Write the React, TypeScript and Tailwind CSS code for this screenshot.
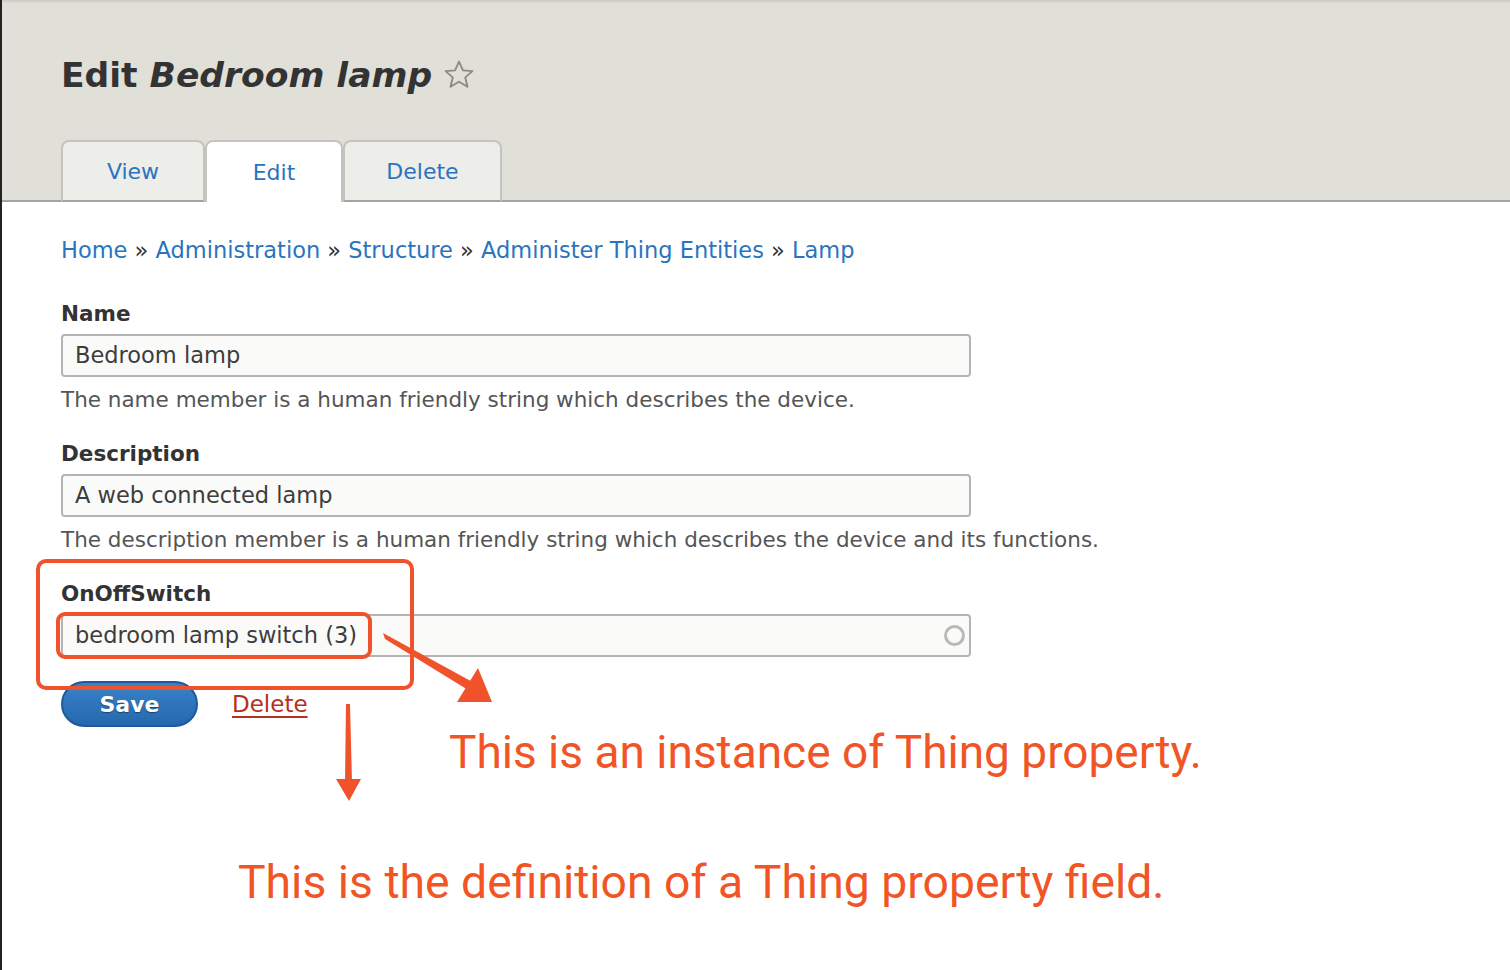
import React from 'react';

const tabs = [
	{ label: 'View', width: 'w-[144px]', active: false },
	{ label: 'Edit', width: 'w-[138px]', active: true },
	{ label: 'Delete', width: 'w-[159px]', active: false },
];

const crumbs = ['Home', 'Administration', 'Structure', 'Administer Thing Entities', 'Lamp'];

function Field({
	label,
	value,
	help,
	busy,
}: {
	label: string;
	value: string;
	help?: string;
	busy?: boolean;
}) {
	return (
		<div className="mb-[24px]">
			<label className="block text-[21.5px] font-bold text-[#333] leading-[30px] mb-[5px]">{label}</label>
			<div className="flex items-center w-[910px] h-[43px] border-2 border-[#b4b4b4] rounded-[4px] bg-[#fafaf8] pl-[12px] pr-[4px] text-[22.5px] text-[#3d3d3d]">
				<span className="flex-1">{value}</span>
				{busy && <span className="w-[21px] h-[21px] rounded-full border-[3px] border-[#b9b9b9]" />}
			</div>
			{help && <p className="text-[21.5px] text-[#555] leading-[30px] mt-[8px]">{help}</p>}
		</div>
	);
}

export default function App() {
	return (
		<div
			className="relative min-h-[970px] bg-white border-l-2 border-[#222] overflow-hidden"
			style={{ fontFamily: '"DejaVu Sans", "Lucida Grande", sans-serif' }}
		>
			{/* Header */}
			<div className="h-[202px] bg-[#e0dfd8] border-b-2 border-[#a4a4a4] pl-[59px] flex flex-col justify-between shadow-[inset_0_3px_3px_-2px_rgba(0,0,0,0.15)]">
				<h1 className="flex items-center pt-[51px] text-[34.5px] font-bold text-[#333] leading-[48px]">
					Edit&nbsp;<em>Bedroom lamp</em>
					<svg className="ml-[10px]" width="34" height="34" viewBox="0 0 24 24" fill="none" stroke="#8b8b80" strokeWidth="1.3" strokeLinejoin="round">
						<path d="M12 2.5l2.8 6.2 6.7.6-5.1 4.4 1.6 6.6L12 16.8 6 20.3l1.6-6.6-5.1-4.4 6.7-.6z" />
					</svg>
				</h1>
				<div className="flex -mb-[2px]">
					{tabs.map((t) => (
						<div
							key={t.label}
							className={`${t.width} h-[62px] pt-[1px] flex items-center justify-center text-[22px] text-[#2a74bf] rounded-t-[8px] border-2 border-b-0 ${
								t.active ? 'bg-white border-[#c4c4bf]' : 'bg-[#ededea] border-[#c4c4bf] border-b-2 border-b-[#a4a4a4]'
							}`}
						>
							{t.label}
						</div>
					))}
				</div>
			</div>

			{/* Content */}
			<div className="pl-[59px] pt-[32px]">
				<nav className="text-[22.5px] text-[#2a74bf] leading-[32px] mb-[33px]">
					{crumbs.map((c, i) => (
						<span key={c}>
							{i > 0 && <span className="text-[#333]"> » </span>}
							{c}
						</span>
					))}
				</nav>

				<Field
					label="Name"
					value="Bedroom lamp"
					help="The name member is a human friendly string which describes the device."
				/>
				<Field
					label="Description"
					value="A web connected lamp"
					help="The description member is a human friendly string which describes the device and its functions."
				/>
				<Field label="OnOffSwitch" value="bedroom lamp switch (3)" busy />

				<div className="flex items-center gap-[34px] h-[46px]">
					<button className="w-[137px] h-[46px] rounded-full bg-gradient-to-b from-[#3a82c8] to-[#2568ae] border-2 border-[#1e5a99] text-white text-[22px] font-bold [text-shadow:0_1px_1px_rgba(0,0,0,0.4)]">
						Save
					</button>
					<a className="text-[23px] text-[#b8301c] underline underline-offset-[4px]">Delete</a>
				</div>

				{/* Annotations */}
				<p
					className="pl-[388px] text-[46px] text-[#f15526] leading-[50px]"
					style={{ fontFamily: 'Roboto, "Liberation Sans", sans-serif' }}
				>
					This is an instance of Thing property.
				</p>
				<p
					className="pl-[177px] mt-[80px] text-[46.3px] text-[#f15526] leading-[50px]"
					style={{ fontFamily: 'Roboto, "Liberation Sans", sans-serif' }}
				>
					This is the definition of a Thing property field.
				</p>
			</div>

			{/* Overlay marks */}
			<svg className="absolute left-0 top-0 pointer-events-none" width="1510" height="970">
				<rect x="36" y="561" width="374" height="127" rx="8" fill="none" stroke="#f0532b" strokeWidth="4" />
				<rect x="56" y="614" width="312" height="43" rx="7" fill="none" stroke="#f0532b" strokeWidth="4" />
				<polygon points="381,633 383,639 471,693 476,685" fill="#f0532b" />
				<polygon points="455,702 490,702 476,668" fill="#f0532b" />
				<polygon points="344,704 348,704 350,782 343,782" fill="#f0532b" />
				<polygon points="334,779 359,779 347,801" fill="#f0532b" />
			</svg>
		</div>
	);
}
